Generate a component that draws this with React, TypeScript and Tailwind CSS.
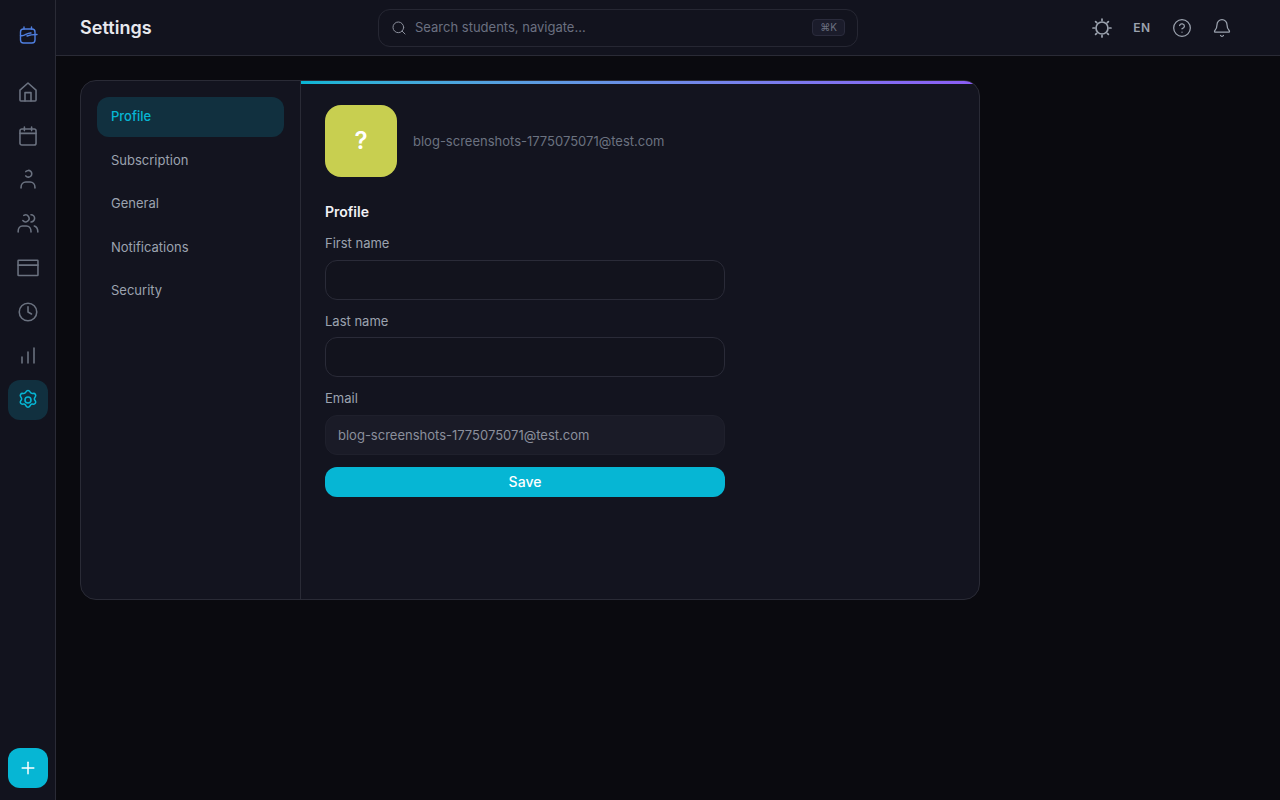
import { Bell, CircleHelp, Plus, Search } from "lucide-react";
import type { ReactNode } from "react";

function NavIcon({ children, active }: { children: ReactNode; active?: boolean }) {
  return (
    <div
      className={`w-10 h-10 rounded-xl flex items-center justify-center ${
        active ? "bg-[#11303f] text-[#06b6d4]" : "text-[#6b7280]"
      }`}
    >
      <svg
        width="24"
        height="24"
        viewBox="0 0 20 20"
        fill="none"
        stroke="currentColor"
        strokeWidth="1.3"
        strokeLinecap="round"
        strokeLinejoin="round"
      >
        {children}
      </svg>
    </div>
  );
}

function Field({ label, value, disabled }: { label: string; value?: string; disabled?: boolean }) {
  return (
    <div>
      <label className="block text-[13px] leading-[19.5px] text-[#9ca3af] mb-1.5">{label}</label>
      <div
        className={`w-[400px] h-10 rounded-xl border flex items-center px-3 pt-[2px] text-[13px] text-[#8b8f9c] ${
          disabled ? "bg-[#1a1b27] border-[#1f202c]" : "bg-[#12131d] border-[#2a2b38]"
        }`}
      >
        {value}
      </div>
    </div>
  );
}

const tabs = ["Profile", "Subscription", "General", "Notifications", "Security"];

export default function App() {
  return (
    <div className="h-[800px] flex bg-[#0a0a0f] font-['Inter',sans-serif] overflow-hidden">
      {/* Sidebar */}
      <aside className="w-14 shrink-0 bg-[#12131e] border-r border-[#2a2b36] flex flex-col items-center">
        <div className="h-14 w-full flex items-center justify-center pt-[14px] text-[#4f7fe0]">
          <svg width="20" height="20" viewBox="0 0 20 20" fill="none" stroke="currentColor" strokeWidth="1.4" strokeLinecap="round" strokeLinejoin="round">
            <rect x="2.500" y="4" width="14.500" height="14" rx="3" />
            <path d="M6 2v2M13.500 2v2" />
            <path d="M2.500 10.500c4 1.500 6-3 10.500-2.500M9 11c3.500-1.500 6-1.500 10-1.500" />
          </svg>
        </div>
        <nav className="mt-4 flex flex-col gap-1">
          <NavIcon>
            <path d="M3.300 8.500 10 2.500l6.700 6v8.200a.8.8 0 0 1-.8.8H4.100a.8.8 0 0 1-.8-.8z" />
            <path d="M7.500 17.500V10.500h5v7" />
          </NavIcon>
          <NavIcon>
            <rect x="3.300" y="4.200" width="13.400" height="13.300" rx="1.500" />
            <path d="M7 2.500v3M13 2.500v3M3.300 7.800h13.400" />
          </NavIcon>
          <NavIcon>
            <path d="M8.200 3a2.800 2.800 0 1 1 0 3.600" />
            <path d="M4.200 16.700v-.5c0-2.600 1.800-4.500 4-4.500h3.600c2.200 0 4 1.900 4 4.500v.5" />
          </NavIcon>
          <NavIcon>
            <path d="M6.500 2.800a2.900 2.900 0 1 1-.8 4.300" />
            <path d="M1.800 16.700v-.5c0-2.600 1.500-4.500 3.500-4.500h3.400c2.200 0 3.800 1.900 3.800 4.500v.5" />
            <path d="M12.500 2.300a3 3 0 0 1 0 6M15.200 11.700c1.900.5 3 2.200 3 5" />
          </NavIcon>
          <NavIcon>
            <rect x="1.700" y="3.600" width="16.600" height="12.700" rx="0.500" />
            <path d="M1.700 7.600h16.600" />
          </NavIcon>
          <NavIcon>
            <circle cx="10" cy="10" r="7.300" />
            <path d="M10 5.600V10l2.900 1.700" />
          </NavIcon>
          <NavIcon>
            <path d="M5 15.800v-5M10 15.800V6.700M15 15.800V3.300" />
          </NavIcon>
          <NavIcon active>
            <path d="M8.400 3a1.800 1.800 0 0 1 3.200 0l.4.700a1.800 1.800 0 0 0 1.700.9l.8-.1a1.800 1.800 0 0 1 1.600 2.800l-.5.700a1.800 1.800 0 0 0 0 2l.5.700a1.800 1.800 0 0 1-1.600 2.800l-.8-.1a1.800 1.800 0 0 0-1.700.9l-.4.700a1.800 1.800 0 0 1-3.200 0l-.4-.7a1.800 1.800 0 0 0-1.700-.9l-.8.1a1.800 1.800 0 0 1-1.600-2.800l.5-.7a1.800 1.800 0 0 0 0-2l-.5-.7a1.800 1.800 0 0 1 1.600-2.800l.8.1a1.800 1.800 0 0 0 1.700-.9z" />
            <circle cx="10" cy="10" r="2.500" />
          </NavIcon>
        </nav>
        <button className="mt-auto mb-3 w-10 h-10 rounded-xl bg-[#06b6d4] flex items-center justify-center text-white">
          <Plus size={20} strokeWidth={1.8} />
        </button>
      </aside>

      <div className="flex-1 min-w-0 flex flex-col">
        {/* Header */}
        <header className="h-14 shrink-0 bg-[#12131e] border-b border-[#2a2b36] flex items-center pl-6">
          <h1 className="w-[298px] pt-px text-lg font-semibold tracking-[0.05px] text-[#e8e9ee]">Settings</h1>
          <div className="w-[480px] h-[38px] rounded-xl border border-[#262733] flex items-center px-3">
            <Search size={16} strokeWidth={1.5} className="text-[#8b8f9c]" />
            <span className="ml-2 text-[13px] text-[#6b7080]">Search students, navigate...</span>
            <span className="ml-auto h-[17px] px-[7px] rounded-[4px] border border-[#2a2b3c] bg-[#1b1c2b] flex items-center text-[10px] text-[#6b7080]">
              ⌘K
            </span>
          </div>
          <div className="ml-auto mr-[38px] flex items-center text-[#9ca3af]">
            <div className="w-10 flex justify-center">
              <svg width="22" height="22" viewBox="0 0 22 22" fill="none" stroke="currentColor" strokeWidth="1.700" strokeLinecap="round">
                <circle cx="11" cy="11" r="6" />
                <path d="M11 2v1.500M11 18.500V20M2 11h1.500M18.500 11H20M4.600 4.600l1.100 1.100M16.300 16.300l1.100 1.100M4.600 17.400l1.100-1.100M16.300 5.700l1.100-1.100" />
              </svg>
            </div>
            <span className="w-10 text-center text-xs font-semibold tracking-[0.5px]">EN</span>
            <div className="w-10 flex justify-center">
              <CircleHelp size={20} strokeWidth={1.5} />
            </div>
            <div className="w-10 flex justify-center">
              <Bell size={20} strokeWidth={1.5} />
            </div>
          </div>
        </header>

        {/* Main */}
        <main className="flex-1 p-6">
          <div className="w-[900px] h-[520px] rounded-2xl border border-[#2a2b36] bg-[#13141f] flex overflow-hidden">
            <div className="w-[220px] shrink-0 border-r border-[#2a2b36] p-4 flex flex-col gap-1">
              {tabs.map((t, i) => (
                <div
                  key={t}
                  className={`h-[39.500px] px-3.5 rounded-xl flex items-center text-[13px] ${
                    i === 0 ? "bg-[#11303f] text-[#06b6d4] font-medium" : "text-[#9ca3af]"
                  }`}
                >
                  {t}
                </div>
              ))}
            </div>
            <div className="flex-1 relative p-6">
              <div className="absolute top-0 left-0 right-0 h-[3px] bg-gradient-to-r from-[#06b6d4] to-[#8b5cf6]" />
              <div className="flex items-center gap-4">
                <div className="w-[72px] h-[72px] rounded-2xl bg-[#c8cf50] flex items-center justify-center text-white text-2xl font-semibold">
                  ?
                </div>
                <span className="mt-[2px] text-[13px] text-[#6b7280]">blog-screenshots-1775075071@test.com</span>
              </div>
              <h2 className="mt-6 text-sm leading-[21px] font-semibold text-[#f1f1f5]">Profile</h2>
              <div className="mt-3 flex flex-col gap-3">
                <Field label="First name" />
                <Field label="Last name" />
                <Field label="Email" value="blog-screenshots-1775075071@test.com" disabled />
              </div>
              <button className="mt-3 w-[400px] h-[30px] rounded-xl bg-[#06b6d4] text-sm font-medium text-white">
                Save
              </button>
            </div>
          </div>
        </main>
      </div>
    </div>
  );
}
